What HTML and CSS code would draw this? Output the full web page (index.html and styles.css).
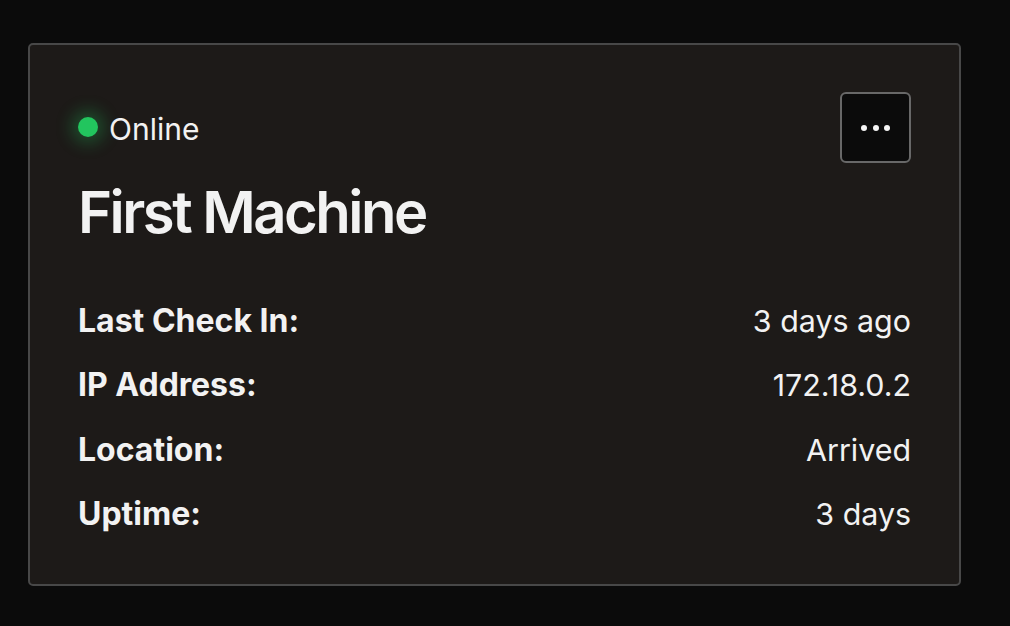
FILE: index.html
```html
<!DOCTYPE html>
<html lang="en">
<head>
    <meta charset="UTF-8">
    <meta name="viewport" content="width=device-width, initial-scale=1.0">
    <title>First Machine</title>
    <link rel="stylesheet" href="styles.css">
</head>
<body>
    <div class="machine-card">
        <div class="card-header">
            <div class="header-main">
                <div class="status">
                    <span class="status-dot"></span>
                    <span class="status-text">Online</span>
                </div>
                <h1 class="machine-name">First Machine</h1>
            </div>
            <button class="menu-button" aria-label="More options">
                <span class="menu-dot"></span>
                <span class="menu-dot"></span>
                <span class="menu-dot"></span>
            </button>
        </div>

        <div class="details">
            <div class="detail-row">
                <span class="detail-label">Last Check In:</span>
                <span class="detail-value">3 days ago</span>
            </div>
            <div class="detail-row">
                <span class="detail-label">IP Address:</span>
                <span class="detail-value">172.18.0.2</span>
            </div>
            <div class="detail-row">
                <span class="detail-label">Location:</span>
                <span class="detail-value">Arrived</span>
            </div>
            <div class="detail-row">
                <span class="detail-label">Uptime:</span>
                <span class="detail-value">3 days</span>
            </div>
        </div>
    </div>
</body>
</html>
```

FILE: styles.css
```css
body {
    font-family: Inter, "Noto Sans", sans-serif;
    margin: 0;
    padding: 43px 49px 30px 28px;
    background-color: #0b0b0b;
    color: #f2f2f2;
}
.machine-card {
    background-color: #1d1a18;
    border: 2px solid #484848;
    border-radius: 5px;
    padding: 47px 48px 37px 48px;
}
.card-header {
    display: flex;
    justify-content: space-between;
    align-items: flex-start;
}
.status {
    display: flex;
    align-items: center;
    height: 68px;
    padding-top: 3px;
}
.status-dot {
    width: 20px;
    height: 20px;
    border-radius: 50%;
    background-color: #22c55e;
    box-shadow: 0 0 16px 7px rgba(34, 197, 94, 0.28);
    margin: 0 11px 4px 0;
}
.status-text {
    font-size: 30px;
    font-weight: 400;
}
.machine-name {
    font-size: 58px;
    font-weight: 600;
    letter-spacing: -2.5px;
    line-height: 1.2;
    margin: 15px 0 0 0;
}
.menu-button {
    width: 71px;
    height: 71px;
    background-color: #0b0b0b;
    border: 2px solid #686868;
    border-radius: 6px;
    display: flex;
    align-items: center;
    justify-content: center;
    gap: 5.5px;
    padding: 0;
    cursor: pointer;
}
.menu-dot {
    width: 6px;
    height: 6px;
    border-radius: 50%;
    background-color: #f5f5f5;
}
.details {
    margin-top: 41px;
}
.detail-row {
    display: flex;
    justify-content: space-between;
    align-items: baseline;
    line-height: 63.5px;
}
.detail-label {
    font-size: 32px;
    font-weight: 700;
}
.detail-value {
    font-size: 30.4px;
    font-weight: 400;
}
```
